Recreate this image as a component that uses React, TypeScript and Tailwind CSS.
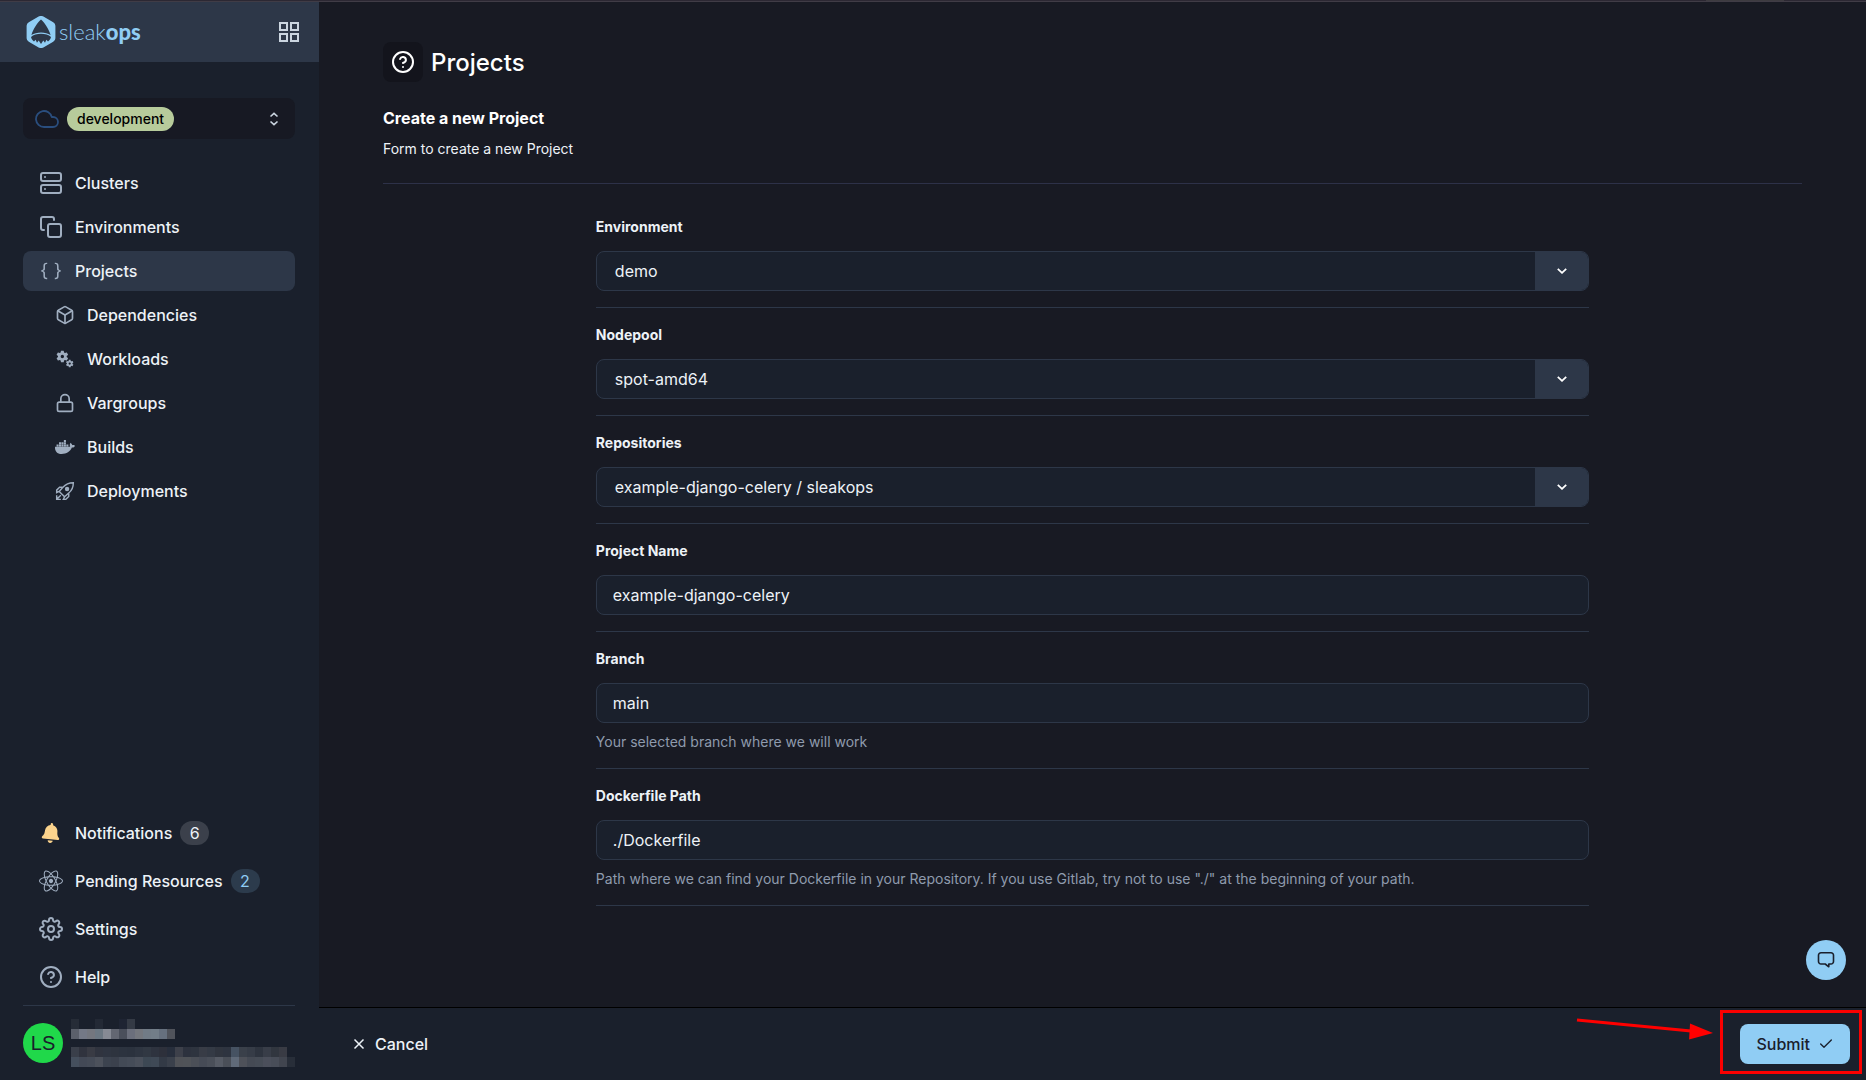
import React from "react";
import { FiBox, FiCheck, FiCloud, FiCopy, FiHelpCircle, FiLock, FiServer, FiSettings } from "react-icons/fi";
import { BsBraces } from "react-icons/bs";
import { FaBell, FaDocker, FaReact } from "react-icons/fa";
import { MdMiscellaneousServices } from "react-icons/md";

function GridIcon() {
  return (
    <svg width="20" height="20" viewBox="0 0 20 20" fill="none" stroke="currentColor" strokeWidth="2">
      <rect x="1" y="1" width="7" height="7" />
      <rect x="12" y="1" width="7" height="7" />
      <rect x="1" y="12" width="7" height="7" />
      <rect x="12" y="12" width="7" height="7" />
    </svg>
  );
}

function LogoMark() {
  return (
    <svg width="30" height="32" viewBox="0 0 30 32">
      <path
        d="M12.6.6a4.6 4.6 0 0 1 4.8 0l9.8 5.6a4 4 0 0 1 2.2 3.6v12.4a4 4 0 0 1-2.2 3.6l-9.8 5.6a4.6 4.6 0 0 1-4.8 0L2.800 25.800A4 4 0 0 1 .6 22.200V9.800A4 4 0 0 1 2.800 6.200Z"
        fill="#90cdf4"
      />
      <path d="M15 3.500c3.500 3 7.500 9 9.600 15.500-5-3.400-14.200-3.400-19.200 0C7.500 12.500 11.500 6.500 15 3.500Z" fill="#2d3748" />
      <path d="M5 21c4.500-4.200 15.500-4.200 20 0-.3 1.800-1.500 3.400-3 4.500l-1.600-1.800-1.400 3-1.700-2.200L15 28l-2.300-3.500L11 26.700l-1.400-3L8 25.500C6.500 24.400 5.300 22.800 5 21Z" fill="#2d3748" />
    </svg>
  );
}

function RocketIcon() {
  return (
    <svg width="20" height="20" viewBox="0 0 24 24" fill="none" stroke="currentColor" strokeWidth="1.700">
      <path d="M9.500 7.500C13 3.500 17.500 2 22 2c0 4.500-1.500 9-5.500 12.500L11.500 19 5 12.500Z" />
      <path d="M9 7.500H5.500L2 11v3l3-1.500M16.500 15v3.500L13 22h-3l1.500-3M2 17v5h5M2 22l5-5" />
      <circle cx="14.500" cy="9.500" r="1.800" fill="currentColor" />
    </svg>
  );
}

function ChatIcon() {
  return (
    <svg width="18" height="18" viewBox="0 0 18 18" fill="none" stroke="currentColor" strokeWidth="1.600" strokeLinejoin="round">
      <path d="M4 1.800h10a2.500 2.500 0 0 1 2.500 2.500v6.200a2.500 2.500 0 0 1-2.500 2.500h-2.200v2.800L8.200 13H4a2.500 2.500 0 0 1-2.500-2.500V4.300A2.500 2.500 0 0 1 4 1.800Z" />
    </svg>
  );
}

function ChevronDown() {
  return (
    <svg width="10" height="6" viewBox="0 0 10 6" fill="none" stroke="currentColor" strokeWidth="1.800">
      <path d="m.8.8 4.200 4 4.200-4" />
    </svg>
  );
}

const navItems = [
  { label: "Clusters", icon: <FiServer size={24} /> },
  { label: "Environments", icon: <FiCopy size={24} /> },
  { label: "Projects", icon: <BsBraces size={22} />, active: true },
];

const subItems = [
  { label: "Dependencies", icon: <FiBox size={20} strokeWidth={2} /> },
  { label: "Workloads", icon: <MdMiscellaneousServices size={20} /> },
  { label: "Vargroups", icon: <FiLock size={20} strokeWidth={2} /> },
  { label: "Builds", icon: <FaDocker size={20} /> },
  { label: "Deployments", icon: <RocketIcon /> },
];

// Redacted user details, one colour per cell.
const nameTop = ["#262c37", "", "", "#232935", "", "", "#1e2433", "#343a45"];
const nameBottom = ["#5b606b", "#747986", "#74777f", "#6c7883", "#868a94", "#636772", "#4a4f5b", "#6b6f7c", "#74777e", "#717b86", "#727d88", "#66707e", "#50535b"];
const mailTop = ["#3a3f4a", "#30333e", "#393b44", "#30343f", "#2f3541", "#2e343f", "#2c333f", "#2b323e", "#2e3541", "#313843", "#2e333f", "#2d303b", "#272e3c", "#3d404a", "#2d323e", "#2e343f", "#383c46", "#343a45", "#30353f", "#2e3440", "#465262", "#3a404a", "#363c47", "#2e343f", "#383d48", "#31363f", "#393b44"];
const mailBottom = ["#454f5d", "#434956", "#454b57", "#4c515b", "#3c434f", "#3b414d", "#434a56", "#454c58", "#4a505b", "#3d4854", "#3f4956", "#333a46", "#3a404b", "#505257", "#505358", "#4b4f57", "#464b56", "#4a4f59", "#565b65", "#4a4f58", "#606a79", "#4e5159", "#454a54", "#464c56", "#4b4f5b", "#484d58", "#41454f", "#282e39"];

function Cells({ colors }: { colors: string[] }) {
  return (
    <div className="flex">
      {colors.map((c, i) => (
        <span key={i} className="h-[10px] w-2" style={{ backgroundColor: c || "transparent" }} />
      ))}
    </div>
  );
}

function NavLink({ label, icon, active, sub, children }: { label: string; icon: React.ReactNode; active?: boolean; sub?: boolean; children?: React.ReactNode }) {
  return (
    <a href="#" className={`flex h-10 items-center gap-3 rounded-lg font-medium ${sub ? "pl-8" : "pl-4"} ${active ? "bg-[#2d3748]" : ""}`}>
      <span className={`flex shrink-0 justify-center text-[#a0aec0] ${sub ? "w-5" : "w-6"}`}>{icon}</span>
      <span>{label}</span>
      {children}
    </a>
  );
}

function Sidebar() {
  return (
    <aside className="flex w-[319px] shrink-0 flex-col bg-[#1a202c]">
      <header className="flex h-[60px] shrink-0 items-center justify-between bg-[#2d3748] pl-[26px] pr-5">
        <a href="#" className="flex items-center gap-[3px] text-[#90cdf4]">
          <LogoMark />
          <span className="font-['Lato',sans-serif] text-[22px] leading-6">
            <span className="font-light">sleak</span>
            <span className="font-black">ops</span>
          </span>
        </a>
        <button aria-label="Dashboard" className="text-[#cbd5e0]">
          <GridIcon />
        </button>
      </header>
      <div className="flex flex-1 flex-col pl-[23px] pr-6">
        <button className="mt-9 flex h-[41px] shrink-0 items-center rounded-lg bg-[#171923] pl-3 pr-4">
          <FiCloud size={24} strokeWidth={1.8} className="text-[#2a4e7e]" />
          <span className="ml-2 rounded-full bg-[#b7cb9b] px-[10px] text-sm font-medium leading-6 text-black">development</span>
          <svg className="ml-auto text-[#cbd5e0]" width="10" height="14" viewBox="0 0 10 14" fill="none" stroke="currentColor" strokeWidth="1.600">
            <path d="m1.500 4.500 3.500-3.200 3.500 3.200M1.500 9.500l3.500 3.200 3.500-3.200" />
          </svg>
        </button>
        <nav className="mt-6 flex flex-col gap-1">
          {navItems.map((n) => (
            <NavLink key={n.label} {...n} />
          ))}
          {subItems.map((n) => (
            <NavLink key={n.label} {...n} sub />
          ))}
        </nav>
        <nav className="mt-auto flex flex-col gap-2 pb-2">
          <NavLink label="Notifications" icon={<FaBell size={20} className="rotate-6 text-[#fbd38d]" />}>
            <span className="-ml-1 w-[29px] rounded-full bg-[#3b404b] text-center font-normal leading-6">6</span>
          </NavLink>
          <NavLink label="Pending Resources" icon={<FaReact size={24} />}>
            <span className="-ml-1 w-[29px] rounded-full bg-[#2c3b4c] text-center font-normal leading-6 text-[#90cdf4]">2</span>
          </NavLink>
          <NavLink label="Settings" icon={<FiSettings size={24} />} />
          <NavLink label="Help" icon={<FiHelpCircle size={24} />} />
        </nav>
        <div className="flex h-[75px] shrink-0 items-center gap-2 border-t border-[#2d3748]">
          <span className="flex size-10 shrink-0 items-center justify-center rounded-full bg-[#20d84a] font-['Liberation_Sans',sans-serif] text-xl text-[#1a202c]">LS</span>
          <div className="flex flex-col gap-2">
            <div>
              <Cells colors={nameTop} />
              <Cells colors={nameBottom} />
            </div>
            <div>
              <Cells colors={mailTop} />
              <Cells colors={mailBottom} />
            </div>
          </div>
        </div>
      </div>
    </aside>
  );
}

function Field({ id, label, help, children }: { id: string; label: string; help?: string; children: React.ReactNode }) {
  return (
    <div className="border-b border-[#2d3748] py-4">
      <label htmlFor={id} className="mb-[13px] block text-sm font-bold leading-[22px]">
        {label}
      </label>
      {children}
      {help && <p className="mt-2 text-sm leading-[21px] text-[#8f9bad]">{help}</p>}
    </div>
  );
}

function SelectField({ id, label, value }: { id: string; label: string; value: string }) {
  return (
    <Field id={id} label={label}>
      <div className="relative h-10 overflow-hidden rounded-lg border border-[#2d3748] bg-[#1a202c]">
        <select id={id} className="h-full w-full appearance-none bg-transparent pl-[18px] pr-16 outline-none">
          <option>{value}</option>
        </select>
        <span className="pointer-events-none absolute inset-y-0 right-0 flex w-[53px] items-center justify-center bg-[#2d3748] text-white">
          <ChevronDown />
        </span>
      </div>
    </Field>
  );
}

function TextField({ id, label, value, help }: { id: string; label: string; value: string; help?: string }) {
  return (
    <Field id={id} label={label} help={help}>
      <input id={id} type="text" defaultValue={value} className="block h-10 w-full rounded-lg border border-[#2d3748] bg-[#1a202c] px-4 outline-none" />
    </Field>
  );
}

export default function App() {
  return (
    <div className="flex h-screen flex-col bg-[#181a23] font-['Inter',sans-serif] text-base text-[#edf2f7]">
      <div className="flex h-[2px] shrink-0 justify-end border-b border-[#403c46] bg-[#2c2833] pr-[82px]">
        <span className="w-[78px] bg-[#3d3b40]" />
      </div>
      <div className="flex min-h-0 flex-1">
        <Sidebar />
        <div className="relative flex min-w-0 flex-1 flex-col">
          <main className="min-h-0 flex-1 overflow-hidden px-16 pt-10">
            <div className="flex items-center gap-2">
              <span className="flex size-10 items-center justify-center rounded-lg bg-[#13141c] text-white">
                <FiHelpCircle size={24} />
              </span>
              <h1 className="pt-[2px] text-2xl font-medium text-white">Projects</h1>
            </div>
            <div className="border-b border-[#2d3148] pb-6 pt-6">
              <h2 className="font-bold leading-6 text-white">Create a new Project</h2>
              <p className="mt-2 text-sm leading-[21px]">Form to create a new Project</p>
            </div>
            <form className="mx-auto mt-4 w-[70%]">
              <SelectField id="environment" label="Environment" value="demo" />
              <SelectField id="nodepool" label="Nodepool" value="spot-amd64" />
              <SelectField id="repositories" label="Repositories" value="example-django-celery / sleakops" />
              <TextField id="project-name" label="Project Name" value="example-django-celery" />
              <TextField id="branch" label="Branch" value="main" help="Your selected branch where we will work" />
              <TextField
                id="dockerfile"
                label="Dockerfile Path"
                value="./Dockerfile"
                help={'Path where we can find your Dockerfile in your Repository. If you use Gitlab, try not to use "./" at the beginning of your path.'}
              />
            </form>
          </main>
          <button aria-label="Open chat" className="absolute bottom-[100px] right-5 flex size-10 items-center justify-center rounded-full bg-[#90cdf4] text-[#1a202c]">
            <ChatIcon />
          </button>
          <footer className="relative flex shrink-0 items-center justify-between border-t border-black bg-[#1a202c] p-4">
            <button className="flex h-10 items-center gap-[10px] px-[18px] font-medium">
              <svg width="12" height="12" viewBox="0 0 12 12" fill="none" stroke="currentColor" strokeWidth="1.500">
                <path d="m1.500 1.500 9 9M10.500 1.500l-9 9" />
              </svg>
              Cancel
            </button>
            <button className="flex h-10 items-center gap-2 rounded-lg bg-[#90cdf4] px-4 font-medium text-[#1a202c]">
              Submit
              <FiCheck size={16} strokeWidth={2} />
            </button>
            <svg className="pointer-events-none absolute right-[152px] top-2" width="138" height="34" viewBox="0 0 138 34">
              <path d="m1 4 114 11" stroke="#ff0000" strokeWidth="3" />
              <path d="M114 7.500 137 17l-24 6.500Z" fill="#ff0000" />
            </svg>
            <div className="pointer-events-none absolute right-1 top-[2px] h-16 w-[142px] border-[3px] border-[#fb0000]" />
          </footer>
        </div>
      </div>
    </div>
  );
}
